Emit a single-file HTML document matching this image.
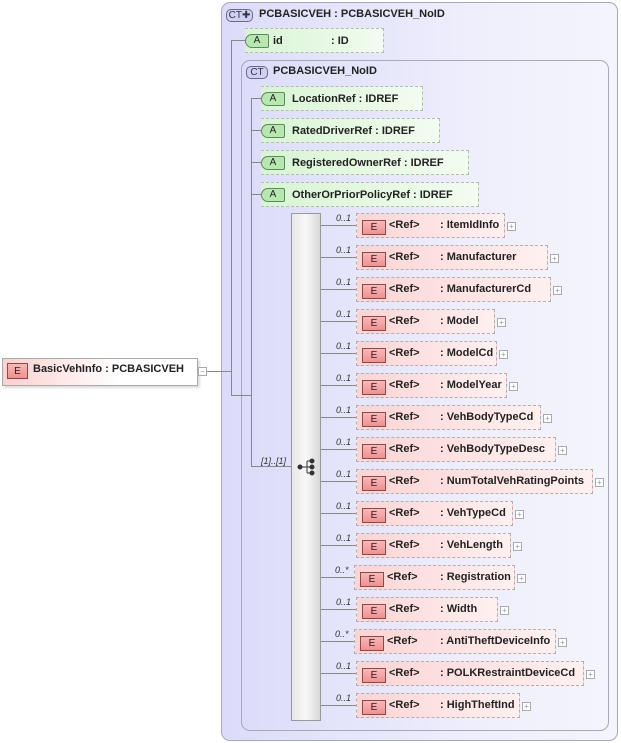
<!DOCTYPE html>
<html><head><meta charset="utf-8"><style>
*{box-sizing:border-box;margin:0;padding:0}
body{width:621px;height:743px;background:#fff;position:relative;overflow:hidden;font-family:"Liberation Sans",Arial,sans-serif;font-size:11px;font-weight:bold;color:#222}
.a{position:absolute}
.ct{position:absolute;border:1px solid #a8a8b8;border-radius:9px;background:linear-gradient(90deg,#dcdcfa,#f0f0fc 70%,#f4f4fc)}
.badge{position:absolute;border:1px solid #6a6a8a;border-radius:5px;background:#d0d0f4;font-size:10px;font-weight:normal;text-align:center;line-height:12px;height:13px;color:#334}
.attr{position:absolute;height:25px;border:1px dashed #b8b8b8;border-left:none;background:linear-gradient(90deg,#d8f4d4,#f2fcf0);}
.attr .ab{position:absolute;left:0;top:5px;width:24px;height:14px;border:1px solid #5a8a5a;border-radius:7px 2px 2px 7px;background:#b8e8b0;font-size:10px;text-align:center;line-height:12px;font-weight:normal}
.attr span{position:absolute;top:6px;white-space:pre}
.el{position:absolute;height:25px;border:1px dashed #b0b0b0;background:linear-gradient(90deg,#fcd4d4,#fff0f0);}
.el .eb{position:absolute;left:5px;top:6px;width:24px;height:15px;border:1px solid #8a4a4a;background:linear-gradient(#f8b8b8,#f09090);font-size:10px;text-align:center;line-height:14px;font-weight:normal}
.el span{position:absolute;top:5px;white-space:pre}
.pl{position:absolute;width:9px;height:9px;border:1px solid #aaa;background:#fff;font-size:8px;line-height:7px;text-align:center;color:#999;font-weight:normal}
.card{position:absolute;font-size:9px;font-style:italic;font-weight:normal;color:#333}
.h{position:absolute;height:1px;background:#888}
.v{position:absolute;width:1px;background:#888}
</style></head><body>
<div class="ct" style="left:221px;top:2px;width:397px;height:739px"></div>
<div class="badge" style="left:226px;top:9px;width:27px">CT✚</div>
<div class="a" style="left:259px;top:8px">PCBASICVEH : PCBASICVEH_NoID</div>
<div class="attr" style="left:245px;top:28px;width:139px"><div class="ab">A</div><span style="left:28px">id</span><span style="left:86px">: ID</span></div>
<div class="ct" style="left:241px;top:60px;width:368px;height:671px"></div>
<div class="badge" style="left:246px;top:66px;width:22px">CT</div>
<div class="a" style="left:273px;top:65px">PCBASICVEH_NoID</div>
<div class="attr" style="left:261px;top:86px;width:162px"><div class="ab">A</div><span style="left:31px">LocationRef : IDREF</span></div>
<div class="attr" style="left:261px;top:118px;width:179px"><div class="ab">A</div><span style="left:31px">RatedDriverRef : IDREF</span></div>
<div class="attr" style="left:261px;top:150px;width:208px"><div class="ab">A</div><span style="left:31px">RegisteredOwnerRef : IDREF</span></div>
<div class="attr" style="left:261px;top:182px;width:218px"><div class="ab">A</div><span style="left:31px">OtherOrPriorPolicyRef : IDREF</span></div>
<!-- lines -->
<div class="v" style="left:231px;top:40px;height:355px"></div>
<div class="h" style="left:231px;top:40px;width:14px"></div>
<div class="h" style="left:207px;top:371px;width:24px"></div>
<div class="h" style="left:231px;top:395px;width:20px"></div>
<div class="v" style="left:251px;top:98px;height:368px"></div>
<div class="h" style="left:251px;top:98px;width:10px"></div>
<div class="h" style="left:251px;top:130px;width:10px"></div>
<div class="h" style="left:251px;top:162px;width:10px"></div>
<div class="h" style="left:251px;top:194px;width:10px"></div>
<div class="h" style="left:251px;top:466px;width:40px"></div>
<div class="card" style="left:261px;top:456px">[1]..[1]</div>
<div class="a" style="left:291px;top:213px;width:30px;height:508px;border:1px solid #999;background:linear-gradient(90deg,#e8e8e8,#f8f8f8 50%,#d8d8d8)"></div>
<svg class="a" style="left:297px;top:458px" width="20" height="18"><g fill="#333" stroke="#333"><circle cx="3" cy="9" r="2"/><line x1="3" y1="9" x2="10" y2="9"/><line x1="10" y1="3" x2="10" y2="15"/><line x1="10" y1="3" x2="15" y2="3"/><line x1="10" y1="9" x2="15" y2="9"/><line x1="10" y1="15" x2="15" y2="15"/><circle cx="15" cy="3" r="2"/><circle cx="15" cy="9" r="2"/><circle cx="15" cy="15" r="2"/></g></svg>
<!-- BasicVehInfo -->
<div class="a" style="left:2px;top:358px;width:196px;height:28px;border:1px solid #aaa;background:linear-gradient(90deg,#fcd0d0,#fff 60%);box-shadow:2px 2px 2px #ddd"></div>
<div class="a" style="left:7px;top:363px;width:21px;height:16px;border:1px solid #8a4a4a;background:linear-gradient(#f8b8b8,#f09090);font-size:10px;font-weight:normal;text-align:center;line-height:15px">E</div>
<div class="a" style="left:33px;top:363px">BasicVehInfo : PCBASICVEH</div>
<div class="pl" style="left:198px;top:367px">−</div>

<div class="el" style="left:356px;top:213px;width:149px"><div class="eb">E</div><span style="left:32px">&lt;Ref&gt;</span><span style="left:83px">: ItemIdInfo</span></div><div class="pl" style="left:507px;top:222px">+</div>
<div class="el" style="left:356px;top:245px;width:192px"><div class="eb">E</div><span style="left:32px">&lt;Ref&gt;</span><span style="left:83px">: Manufacturer</span></div><div class="pl" style="left:550px;top:254px">+</div>
<div class="el" style="left:356px;top:277px;width:195px"><div class="eb">E</div><span style="left:32px">&lt;Ref&gt;</span><span style="left:83px">: ManufacturerCd</span></div><div class="pl" style="left:553px;top:286px">+</div>
<div class="el" style="left:356px;top:309px;width:139px"><div class="eb">E</div><span style="left:32px">&lt;Ref&gt;</span><span style="left:83px">: Model</span></div><div class="pl" style="left:497px;top:318px">+</div>
<div class="el" style="left:356px;top:341px;width:141px"><div class="eb">E</div><span style="left:32px">&lt;Ref&gt;</span><span style="left:83px">: ModelCd</span></div><div class="pl" style="left:499px;top:350px">+</div>
<div class="el" style="left:356px;top:373px;width:151px"><div class="eb">E</div><span style="left:32px">&lt;Ref&gt;</span><span style="left:83px">: ModelYear</span></div><div class="pl" style="left:509px;top:382px">+</div>
<div class="el" style="left:356px;top:405px;width:185px"><div class="eb">E</div><span style="left:32px">&lt;Ref&gt;</span><span style="left:83px">: VehBodyTypeCd</span></div><div class="pl" style="left:543px;top:414px">+</div>
<div class="el" style="left:356px;top:437px;width:200px"><div class="eb">E</div><span style="left:32px">&lt;Ref&gt;</span><span style="left:83px">: VehBodyTypeDesc</span></div><div class="pl" style="left:558px;top:446px">+</div>
<div class="el" style="left:356px;top:469px;width:237px"><div class="eb">E</div><span style="left:32px">&lt;Ref&gt;</span><span style="left:83px">: NumTotalVehRatingPoints</span></div><div class="pl" style="left:595px;top:478px">+</div>
<div class="el" style="left:356px;top:501px;width:157px"><div class="eb">E</div><span style="left:32px">&lt;Ref&gt;</span><span style="left:83px">: VehTypeCd</span></div><div class="pl" style="left:515px;top:510px">+</div>
<div class="el" style="left:356px;top:533px;width:155px"><div class="eb">E</div><span style="left:32px">&lt;Ref&gt;</span><span style="left:83px">: VehLength</span></div><div class="pl" style="left:513px;top:542px">+</div>
<div class="el" style="left:354px;top:565px;width:161px"><div class="eb">E</div><span style="left:32px">&lt;Ref&gt;</span><span style="left:85px">: Registration</span></div><div class="pl" style="left:517px;top:574px">+</div>
<div class="el" style="left:356px;top:597px;width:142px"><div class="eb">E</div><span style="left:32px">&lt;Ref&gt;</span><span style="left:83px">: Width</span></div><div class="pl" style="left:500px;top:606px">+</div>
<div class="el" style="left:354px;top:629px;width:202px"><div class="eb">E</div><span style="left:32px">&lt;Ref&gt;</span><span style="left:85px">: AntiTheftDeviceInfo</span></div><div class="pl" style="left:558px;top:638px">+</div>
<div class="el" style="left:356px;top:661px;width:228px"><div class="eb">E</div><span style="left:32px">&lt;Ref&gt;</span><span style="left:83px">: POLKRestraintDeviceCd</span></div><div class="pl" style="left:586px;top:670px">+</div>
<div class="el" style="left:356px;top:693px;width:164px"><div class="eb">E</div><span style="left:32px">&lt;Ref&gt;</span><span style="left:83px">: HighTheftInd</span></div><div class="pl" style="left:522px;top:702px">+</div>

<div class="h" style="left:321px;top:225px;width:35px"></div><div class="card" style="left:336px;top:213px">0..1</div>
<div class="h" style="left:321px;top:257px;width:35px"></div><div class="card" style="left:336px;top:245px">0..1</div>
<div class="h" style="left:321px;top:289px;width:35px"></div><div class="card" style="left:336px;top:277px">0..1</div>
<div class="h" style="left:321px;top:321px;width:35px"></div><div class="card" style="left:336px;top:309px">0..1</div>
<div class="h" style="left:321px;top:353px;width:35px"></div><div class="card" style="left:336px;top:341px">0..1</div>
<div class="h" style="left:321px;top:385px;width:35px"></div><div class="card" style="left:336px;top:373px">0..1</div>
<div class="h" style="left:321px;top:417px;width:35px"></div><div class="card" style="left:336px;top:405px">0..1</div>
<div class="h" style="left:321px;top:449px;width:35px"></div><div class="card" style="left:336px;top:437px">0..1</div>
<div class="h" style="left:321px;top:481px;width:35px"></div><div class="card" style="left:336px;top:469px">0..1</div>
<div class="h" style="left:321px;top:513px;width:35px"></div><div class="card" style="left:336px;top:501px">0..1</div>
<div class="h" style="left:321px;top:545px;width:35px"></div><div class="card" style="left:336px;top:533px">0..1</div>
<div class="h" style="left:321px;top:577px;width:33px"></div><div class="card" style="left:335px;top:565px">0..*</div>
<div class="h" style="left:321px;top:609px;width:35px"></div><div class="card" style="left:336px;top:597px">0..1</div>
<div class="h" style="left:321px;top:641px;width:33px"></div><div class="card" style="left:335px;top:629px">0..*</div>
<div class="h" style="left:321px;top:673px;width:35px"></div><div class="card" style="left:336px;top:661px">0..1</div>
<div class="h" style="left:321px;top:705px;width:35px"></div><div class="card" style="left:336px;top:693px">0..1</div>
</body></html>
